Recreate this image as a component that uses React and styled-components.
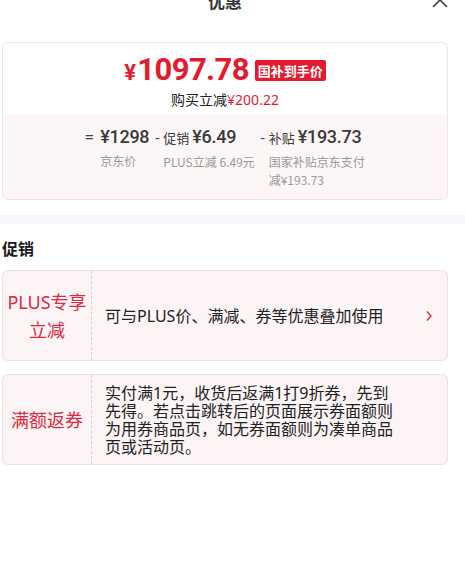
import React from "react";
import styled, { createGlobalStyle } from "styled-components";

const Global = createGlobalStyle`
  *, *::before, *::after { box-sizing: border-box; }
  html, body { margin: 0; padding: 0; background: #fff; }
  body {
    font-family: "Noto Sans", "Noto Sans CJK SC", sans-serif;
    color: #222;
    overflow: hidden;
  }
`;

const Page = styled.div`
  width: 465px;
  display: flex;
  flex-direction: column;
`;

const Header = styled.div`
  position: relative;
  height: 36px;
  margin-top: -18px;
  display: flex;
  align-items: center;
  justify-content: center;
  padding: 0 17px 0 2px;
`;

const Title = styled.div`
  font-family: "Noto Sans CJK SC", sans-serif;
  font-size: 17px;
  font-weight: 700;
  color: #333;
`;

const Close = styled.button`
  position: absolute;
  right: 17px;
  top: 10px;
  width: 16px;
  height: 16px;
  padding: 0;
  border: none;
  background: none;
  display: flex;
`;

const Section = styled.div`
  padding: 0 17px 0 2px;
`;

const PriceCard = styled.div`
  margin-top: 24px;
  border: 1px solid #f4e1e4;
  border-radius: 6px;
  overflow: hidden;
  background: #fff;
`;

const PriceTop = styled.div`
  display: flex;
  flex-direction: column;
  align-items: center;
  padding: 8px 0 5px;
`;

const PriceLine = styled.div`
  display: flex;
  align-items: center;
  gap: 6px;
  height: 36px;
`;

const BigPrice = styled.div`
  color: #e31b2f;
  font-family: "Roboto", "Noto Sans", sans-serif;
  font-weight: 700;
  font-size: 31px;
  letter-spacing: -0.6px;
  display: flex;
  align-items: baseline;
`;

const Yen = styled.span`
  font-size: 22px;
  margin-right: 2px;
`;

const Badge = styled.span`
  background: #e31b2f;
  color: #fff;
  font-family: "Noto Sans CJK SC", sans-serif;
  font-weight: 700;
  font-size: 13px;
  line-height: 21px;
  padding: 0 3px;
  border-radius: 2px;
  margin-top: 2px;
`;

const SubLine = styled.div`
  font-family: "Noto Sans CJK SC", sans-serif;
  font-size: 14px;
  line-height: 20px;
  color: #222;
  margin-top: 2px;
`;

const Red = styled.span`
  color: #e31b2f;
  font-family: "Noto Sans", sans-serif;
`;

const Breakdown = styled.div`
  background: #fdf6f7;
  display: flex;
  justify-content: center;
  gap: 5px;
  padding: 8px 0 10px;
`;

const Item = styled.div`
  display: flex;
  align-items: flex-start;
`;

const Sign = styled.span`
  font-size: ${(p) => (p.$eq ? "16px" : "15px")};
  color: #444;
  line-height: 28px;
  margin-right: ${(p) => (p.$eq ? "6px" : "3px")};
  width: ${(p) => (p.$eq ? "10px" : "6px")};
  text-align: center;
`;

const ItemBody = styled.div`
  display: flex;
  flex-direction: column;
`;

const Value = styled.div`
  display: flex;
  align-items: baseline;
  line-height: 28px;
  color: #3a3a3a;
`;

const Prefix = styled.span`
  font-family: "Noto Sans CJK SC", sans-serif;
  font-size: 13px;
  margin-right: 3px;
`;

const Amount = styled.span`
  font-family: "Roboto", "Noto Sans", sans-serif;
  font-weight: 500;
  font-size: 18px;
  letter-spacing: -0.3px;
`;

const Label = styled.div`
  font-family: "Noto Sans CJK SC", sans-serif;
  font-size: 12px;
  line-height: 18px;
  color: #999;
  margin-top: 1px;
  max-width: ${(p) => p.$max || "none"};
`;

const Band = styled.div`
  height: 9px;
  background: #f6f7fa;
  margin-top: 15px;
`;

const Heading = styled.h2`
  margin: 12px 0 10px;
  font-family: "Noto Sans CJK SC", sans-serif;
  font-size: 16px;
  line-height: 24px;
  font-weight: 700;
  color: #1a1a1a;
`;

const PromoList = styled.div`
  display: flex;
  flex-direction: column;
  gap: 13px;
`;

const Promo = styled.div`
  display: flex;
  min-height: 91px;
  border: 1px solid #f5dce1;
  border-radius: 6px;
  background: #fdf4f6;
  overflow: hidden;
`;

const PromoTag = styled.div`
  width: 89px;
  flex-shrink: 0;
  border-right: 1px dashed #ecc9d0;
  display: flex;
  flex-direction: column;
  align-items: center;
  justify-content: center;
  text-align: center;
  font-family: "Noto Sans", "Noto Sans CJK SC", sans-serif;
  font-size: 18px;
  line-height: 28px;
  color: #dc2840;
  white-space: nowrap;
`;

const PromoBody = styled.div`
  flex: 1;
  display: flex;
  align-items: center;
  padding: 8px 14px 8px 13px;
`;

const PromoText = styled.div`
  max-width: 292px;
  font-family: "Noto Sans", "Noto Sans CJK SC", sans-serif;
  font-size: 16px;
  line-height: 18px;
  color: #222;
`;

const Arrow = styled.span`
  margin-left: auto;
  display: flex;
`;

export default function App() {
  return (
    <Page>
      <Global />
      <Header>
        <Title>优惠</Title>
        <Close aria-label="close">
          <svg width="16" height="16" viewBox="0 0 16 16">
            <path d="M1 1 L15 15 M15 1 L1 15" stroke="#333" strokeWidth="1.5" fill="none" />
          </svg>
        </Close>
      </Header>
      <Section>
        <PriceCard>
          <PriceTop>
            <PriceLine>
              <BigPrice>
                <Yen>¥</Yen>1097.78
              </BigPrice>
              <Badge>国补到手价</Badge>
            </PriceLine>
            <SubLine>
              购买立减<Red>¥200.22</Red>
            </SubLine>
          </PriceTop>
          <Breakdown>
            <Item>
              <Sign $eq>=</Sign>
              <ItemBody>
                <Value>
                  <Amount>¥1298</Amount>
                </Value>
                <Label>京东价</Label>
              </ItemBody>
            </Item>
            <Item>
              <Sign>-</Sign>
              <ItemBody>
                <Value>
                  <Prefix>促销</Prefix>
                  <Amount>¥6.49</Amount>
                </Value>
                <Label>PLUS立减 6.49元</Label>
              </ItemBody>
            </Item>
            <Item>
              <Sign>-</Sign>
              <ItemBody>
                <Value>
                  <Prefix>补贴</Prefix>
                  <Amount>¥193.73</Amount>
                </Value>
                <Label $max="97px">国家补贴京东支付减¥193.73</Label>
              </ItemBody>
            </Item>
          </Breakdown>
        </PriceCard>
      </Section>
      <Band />
      <Section>
        <Heading>促销</Heading>
        <PromoList>
          <Promo>
            <PromoTag>
              <span>PLUS专享</span>
              <span>立减</span>
            </PromoTag>
            <PromoBody>
              <PromoText>可与PLUS价、满减、券等优惠叠加使用</PromoText>
              <Arrow>
                <svg width="8" height="12" viewBox="0 0 8 12">
                  <path d="M2 1.5 L6 6 L2 10.5" stroke="#dc2840" strokeWidth="1.4" fill="none" />
                </svg>
              </Arrow>
            </PromoBody>
          </Promo>
          <Promo>
            <PromoTag>满额返券</PromoTag>
            <PromoBody>
              <PromoText>
                实付满1元，收货后返满1打9折券，先到先得。若点击跳转后的页面展示券面额则为用券商品页，如无券面额则为凑单商品页或活动页。
              </PromoText>
            </PromoBody>
          </Promo>
        </PromoList>
      </Section>
    </Page>
  );
}
